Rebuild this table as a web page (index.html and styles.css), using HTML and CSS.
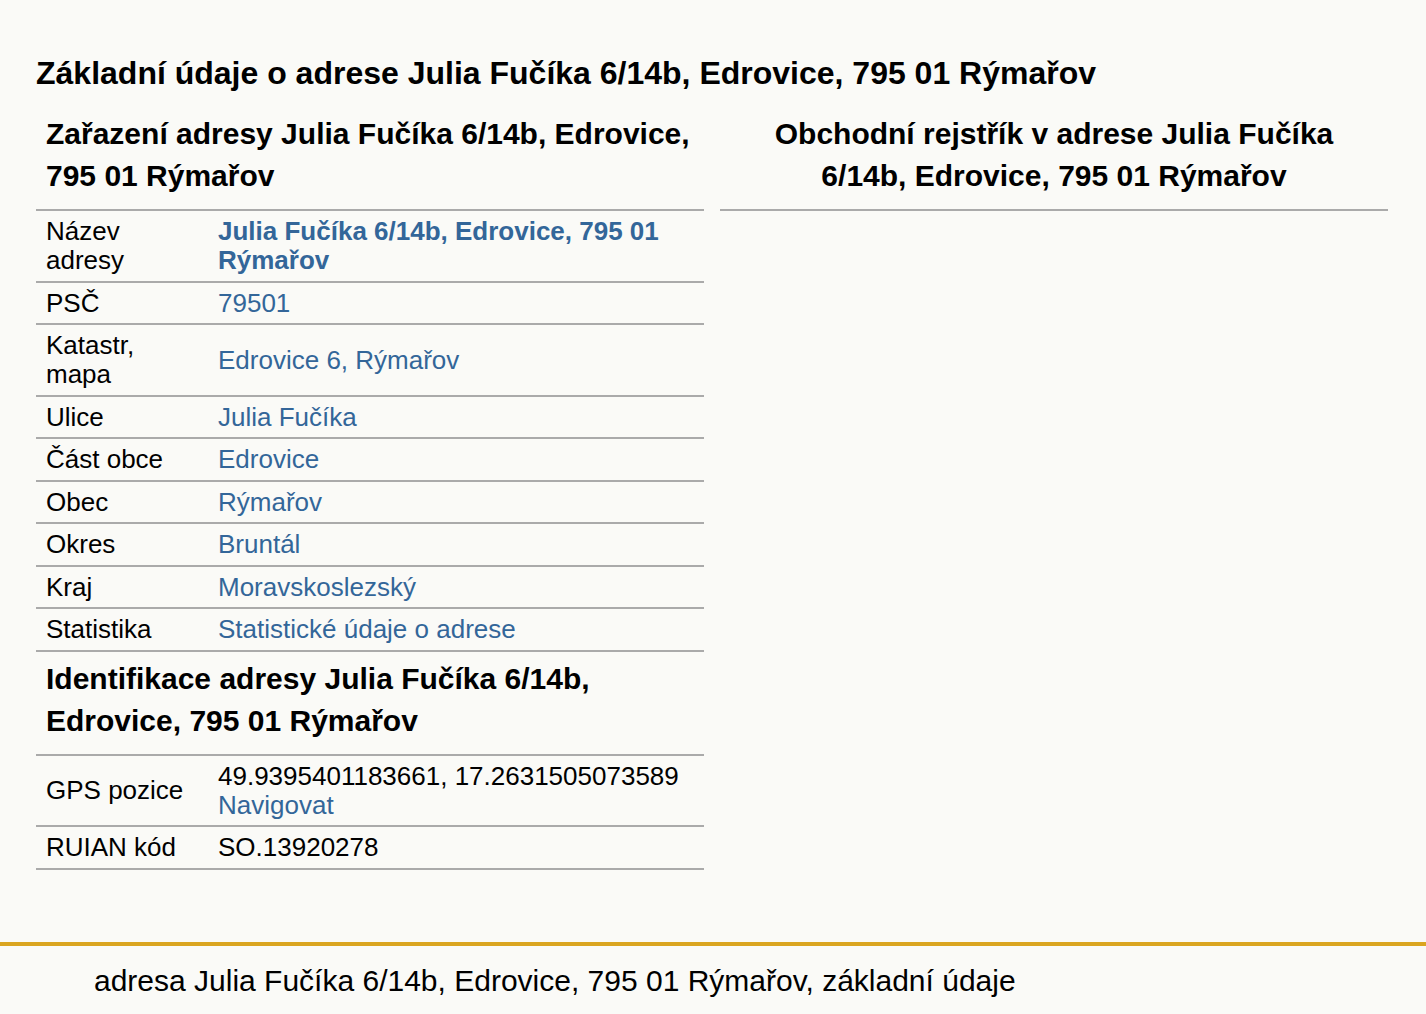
FILE: index.html
```html
<!DOCTYPE html>
<html lang="cs">
<head>
    <meta charset="UTF-8">
    <meta name="viewport" content="width=device-width, initial-scale=1.0">
    <title>Julia Fučíka 6/14b, Edrovice, 795 01 Rýmařov</title>
    <link rel="stylesheet" href="styles.css">
</head>
<body>

    <div class="page">
        <h1>Základní údaje o adrese Julia Fučíka 6/14b, Edrovice, 795 01 Rýmařov</h1>

        <div class="columns">
            <div class="column">
                <table class="info">
                    <tr>
                        <th colspan="2" class="heading">Zařazení adresy Julia Fučíka 6/14b, Edrovice, 795 01 Rýmařov</th>
                    </tr>
                    <tr>
                        <td class="label">Název adresy</td>
                        <td><a href="#" class="strong">Julia Fučíka 6/14b, Edrovice, 795 01 Rýmařov</a></td>
                    </tr>
                    <tr>
                        <td class="label">PSČ</td>
                        <td><a href="#">79501</a></td>
                    </tr>
                    <tr>
                        <td class="label">Katastr, mapa</td>
                        <td><a href="#">Edrovice 6, Rýmařov</a></td>
                    </tr>
                    <tr>
                        <td class="label">Ulice</td>
                        <td><a href="#">Julia Fučíka</a></td>
                    </tr>
                    <tr>
                        <td class="label">Část obce</td>
                        <td><a href="#">Edrovice</a></td>
                    </tr>
                    <tr>
                        <td class="label">Obec</td>
                        <td><a href="#">Rýmařov</a></td>
                    </tr>
                    <tr>
                        <td class="label">Okres</td>
                        <td><a href="#">Bruntál</a></td>
                    </tr>
                    <tr>
                        <td class="label">Kraj</td>
                        <td><a href="#">Moravskoslezský</a></td>
                    </tr>
                    <tr>
                        <td class="label">Statistika</td>
                        <td><a href="#">Statistické údaje o adrese</a></td>
                    </tr>
                    <tr>
                        <th colspan="2" class="heading">Identifikace adresy Julia Fučíka 6/14b, Edrovice, 795 01 Rýmařov</th>
                    </tr>
                    <tr>
                        <td class="label">GPS pozice</td>
                        <td>49.9395401183661, 17.2631505073589<br><a href="#">Navigovat</a></td>
                    </tr>
                    <tr>
                        <td class="label">RUIAN kód</td>
                        <td>SO.13920278</td>
                    </tr>
                </table>
            </div>

            <div class="column">
                <table class="info">
                    <tr>
                        <th class="heading center">Obchodní rejstřík v adrese Julia Fučíka 6/14b, Edrovice, 795 01 Rýmařov</th>
                    </tr>
                </table>
            </div>
        </div>
    </div>

    <div class="footer">
        <p>adresa Julia Fučíka 6/14b, Edrovice, 795 01 Rýmařov, základní údaje</p>
    </div>

</body>
</html>
```

FILE: styles.css
```css
body {
    margin: 0;
    font-family: "Liberation Sans", Arial, sans-serif;
    background-color: #fafaf7;
    color: #000;
}
a {
    color: #336699;
    text-decoration: none;
}
a.strong {
    font-weight: bold;
}
.page {
    padding: 50px 36px 0 36px;
}
h1 {
    font-size: 32px;
    line-height: 46px;
    margin: 0 0 11px 0;
}
.columns {
    display: flex;
    gap: 16px;
    width: 1352px;
}
.column {
    width: 668px;
}
.info {
    width: 100%;
    border-collapse: collapse;
    font-size: 26px;
    line-height: 29px;
}
.info td, .info th {
    border-bottom: 2px solid #aaa;
    padding: 6px 10px 5.5px 10px;
    vertical-align: middle;
}
.info .heading {
    font-size: 30px;
    line-height: 42px;
    text-align: left;
    padding: 6px 10px 12px 10px;
}
.info .center {
    text-align: center;
}
.label {
    width: 152px;
}
.footer {
    margin-top: 72px;
    border-top: 4px solid #daa520;
}
.footer p {
    margin: 0;
    padding: 17px 94px 12px 94px;
    font-size: 30px;
    line-height: 36px;
}
```
